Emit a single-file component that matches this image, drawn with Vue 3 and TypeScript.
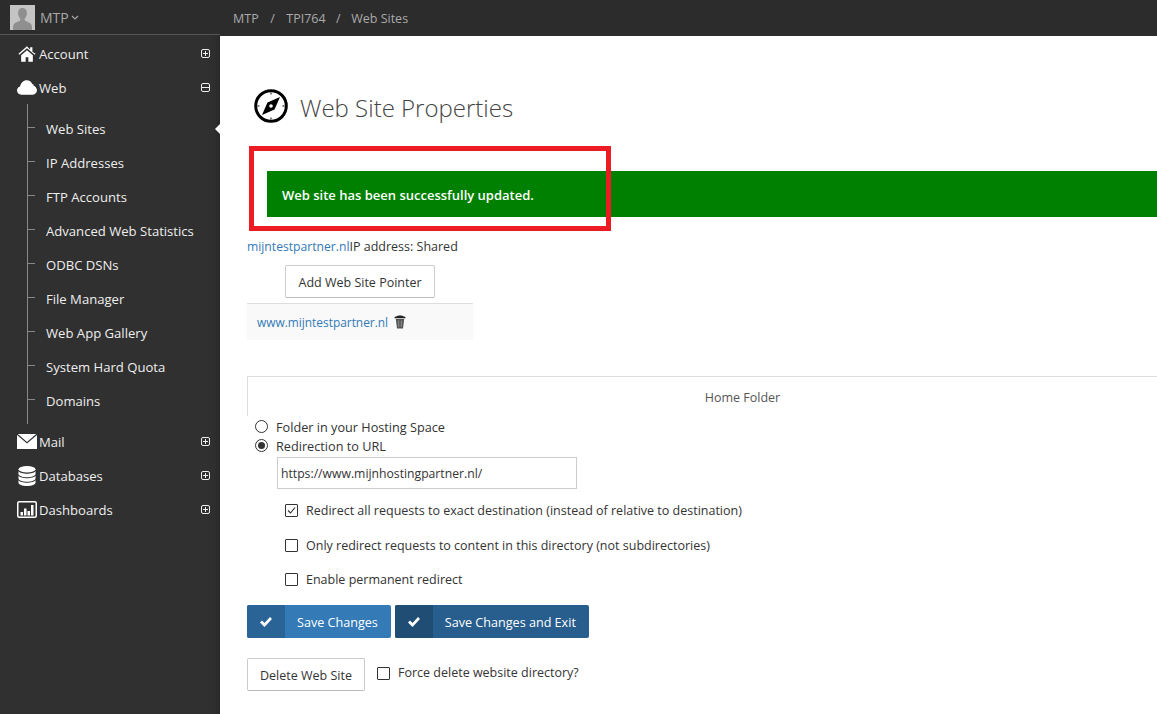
<script setup lang="ts">
const subItems: string[] = ['Web Sites', 'IP Addresses', 'FTP Accounts', 'Advanced Web Statistics', 'ODBC DSNs', 'File Manager', 'Web App Gallery', 'System Hard Quota', 'Domains']
</script>

<template>
  <div class="page">
    <aside class="sidebar">
      <div class="user">
        <svg class="avatar" viewBox="0 0 25 25">
          <rect width="25" height="25" fill="#c4c4c4" />
          <path d="M12.5 3c3.2 0 4.6 2.6 4.4 5.6-.1 2-1 3.900-2 5-.5.600-.4 1.700.4 2.200 2.200 1.200 6.700 2.200 6.700 6.400V25H3v-2.800c0-4.200 4.500-5.200 6.700-6.400.8-.5.9-1.600.4-2.200-1-1.100-1.900-3-2-5C7.900 5.600 9.300 3 12.500 3z" fill="#8f8f8f" />
        </svg>
        <span class="user-name">MTP</span>
        <svg class="caret" viewBox="0 0 8 5"><path d="M1 1l3 3 3-3" fill="none" stroke="#aaa" stroke-width="1.100" /></svg>
      </div>
      <nav class="nav">
        <div class="row">
          <svg class="ico home" viewBox="0 0 20 17"><path d="M10 0L.5 8.200l1 1.200L10 2.200l8.500 7.200 1-1.200L16 6V1h-2.500v2.900L10 0zM3.500 10V17h5v-5h3v5h5v-7L10 4.200z" fill="#fff" /></svg>
          <span>Account</span>
          <svg class="tog" viewBox="0 0 9 9"><rect x=".5" y=".5" width="8" height="8" rx="1.500" fill="none" stroke="#eee" /><path d="M2 4.500h5M4.500 2v5" stroke="#eee" /></svg>
        </div>
        <div class="row">
          <svg class="ico cloud" viewBox="0 0 21 15"><path d="M4.500 15C2 15 0 13.100 0 10.700 0 8.700 1.300 7.100 3.200 6.500 4 2.700 6.800 0 10.200 0c2.700 0 4.900 1.600 5.900 4 .3-.1.700-.1 1-.1 0 0 .1 0 .1 1.400 2.200.9 3.800 2.900 3.800 5.200 0 2.500-2 4.500-4.500 4.500z" fill="#fff" /></svg>
          <span>Web</span>
          <svg class="tog" viewBox="0 0 9 9"><rect x=".5" y=".5" width="8" height="8" rx="1.500" fill="none" stroke="#eee" /><path d="M1 4.500h7" stroke="#eee" /></svg>
        </div>
        <ul class="sub">
          <li v-for="(item, i) in subItems" :key="item" class="sub-item">
            {{ item }}
            <span v-if="i === 0" class="active-arrow"></span>
          </li>
        </ul>
        <div class="row">
          <svg class="ico mail" viewBox="0 0 20 15"><path d="M.8 0h18.400L10 8z" fill="#fff" /><path d="M0 1v14h20V1L10 9.600z" fill="#fff" /></svg>
          <span>Mail</span>
          <svg class="tog" viewBox="0 0 9 9"><rect x=".5" y=".5" width="8" height="8" rx="1.500" fill="none" stroke="#eee" /><path d="M2 4.500h5M4.500 2v5" stroke="#eee" /></svg>
        </div>
        <div class="row">
          <svg class="ico db" viewBox="0 0 18 20"><ellipse cx="9" cy="3.200" rx="8.500" ry="3.200" fill="#fff" /><path d="M.5 5c1 1.800 4.800 2.700 8.500 2.700S16.500 6.800 17.500 5v3c0 1.800-3.800 3.200-8.500 3.200S.5 9.800.5 8z" fill="#fff" /><path d="M.5 9.500c1 1.800 4.800 2.700 8.500 2.700s7.500-.9 8.500-2.700v3c0 1.800-3.800 3.200-8.500 3.200S.5 14.300.5 12.500z" fill="#fff" /><path d="M.5 14c1 1.800 4.800 2.700 8.500 2.700s7.500-.9 8.500-2.700v2.800c0 1.800-3.800 3.200-8.500 3.200S.5 18.600.5 16.800z" fill="#fff" /></svg>
          <span>Databases</span>
          <svg class="tog" viewBox="0 0 9 9"><rect x=".5" y=".5" width="8" height="8" rx="1.500" fill="none" stroke="#eee" /><path d="M2 4.500h5M4.500 2v5" stroke="#eee" /></svg>
        </div>
        <div class="row">
          <svg class="ico dash" viewBox="0 0 20 17"><rect x=".75" y=".75" width="18.500" height="15.500" rx="1.500" fill="none" stroke="#fff" stroke-width="1.500" /><path d="M3.500 11h2.500v3.500H3.500zM7 7.500h2.500v7H7zM10.500 10h2.500v4.500h-2.500zM14 4h2.500v10.500H14z" fill="#fff" /></svg>
          <span>Dashboards</span>
          <svg class="tog" viewBox="0 0 9 9"><rect x=".5" y=".5" width="8" height="8" rx="1.500" fill="none" stroke="#eee" /><path d="M2 4.500h5M4.500 2v5" stroke="#eee" /></svg>
        </div>
      </nav>
    </aside>

    <div class="content">
      <header class="topbar">
        <span>MTP</span><span class="sep">/</span><span>TPI764</span><span class="sep tight">/</span><span>Web Sites</span>
      </header>
      <main class="main">
        <div class="title-row">
          <svg class="compass" viewBox="0 0 34 34">
            <circle cx="17" cy="17" r="15.300" fill="none" stroke="#000" stroke-width="3" />
            <path d="M26 8L20.500 20.500 8 26 13.500 13.500z" fill="#000" />
            <path d="M17 3.500v2M17 28.500v2M3.500 17h2M28.500 17h2" stroke="#555" stroke-width="1.400" />
            <circle cx="17" cy="17" r="1.800" fill="#fff" />
          </svg>
          <h1>Web Site Properties</h1>
        </div>
        <div class="alert">Web site has been successfully updated.</div>
        <div class="site-line"><a class="link site">mijntestpartner.nl</a>IP address: Shared</div>
        <div class="pointer-btn-wrap"><button class="btn add">Add Web Site Pointer</button></div>
        <div class="pointer-row">
          <a class="link">www.mijntestpartner.nl</a>
          <svg class="trash" viewBox="0 0 12 14"><path d="M.5 2.200C2 1.200 4 1 4.500.5h3c.5.500 2.500.700 4 1.700v1H.5z" fill="#222" /><path d="M1.800 4h8.400L9 13.500H3z" fill="#555" /><path d="M4.600 5.500l.2 6.500M7.400 5.500l-.2 6.500" stroke="#aaa" stroke-width=".7" /></svg>
        </div>
        <div class="tab">Home Folder</div>
        <label class="radio-line"><span class="radio"></span>Folder in your Hosting Space</label>
        <label class="radio-line second"><span class="radio on"></span>Redirection to URL</label>
        <div class="url-input">https://www.mijnhostingpartner.nl/</div>
        <div class="check-line first">
          <span class="check"><svg viewBox="0 0 11 11"><path d="M2 5.500l2.500 2.500L9 2.500" fill="none" stroke="#333" stroke-width="1.100" /></svg></span>
          Redirect all requests to exact destination (instead of relative to destination)
        </div>
        <div class="check-line middle"><span class="check"></span>Only redirect requests to content in this directory (not subdirectories)</div>
        <div class="check-line"><span class="check"></span>Enable permanent redirect</div>
        <div class="actions">
          <button class="save">
            <span class="save-ico"><svg viewBox="0 0 14 12"><path d="M1 6.500l2-2 2.500 2.500L11 1l2 2-7.500 8z" fill="#fff" /></svg></span>
            <span class="save-label">Save Changes</span>
          </button>
          <button class="save dark">
            <span class="save-ico"><svg viewBox="0 0 14 12"><path d="M1 6.500l2-2 2.500 2.500L11 1l2 2-7.500 8z" fill="#fff" /></svg></span>
            <span class="save-label">Save Changes and Exit</span>
          </button>
        </div>
        <div class="delete-row">
          <button class="btn del">Delete Web Site</button>
          <span class="check force"></span>
          <span class="force-label">Force delete website directory?</span>
        </div>
        <div class="callout"></div>
      </main>
    </div>
  </div>
</template>

<style>
html, body { margin: 0; padding: 0; background: #fff; overflow: hidden; }
</style>

<style scoped>
.page { display: flex; width: 1157px; height: 714px; overflow: hidden; font-family: "Open Sans", "Noto Sans", sans-serif; font-size: 12.500px; color: #333; }
.sidebar { width: 220px; flex: none; background: #303030; color: #eee; font-size: 13.100px; box-shadow: inset -8px 0 6px -6px #262626; }
.user { height: 34px; display: flex; align-items: center; padding-left: 10px; border-bottom: 1px solid #555; background: #2c2c2c; }
.avatar { width: 25px; height: 25px; display: block; }
.user-name { margin-left: 5px; font-size: 14px; color: #a8a8a8; }
.caret { width: 8px; height: 5px; margin-left: 2px; }
.nav { padding-top: 2px; }
.row { height: 34px; display: flex; align-items: center; position: relative; padding-left: 39px; }
.ico { position: absolute; }
.home { left: 18px; top: 9px; width: 18px; height: 16px; }
.cloud { left: 17px; top: 9px; width: 20px; height: 15px; }
.mail { left: 17px; top: 9px; width: 20px; height: 15px; }
.db { left: 18px; top: 7px; width: 18px; height: 20px; }
.dash { left: 17px; top: 8px; width: 20px; height: 17px; }
.tog { position: absolute; left: 201px; top: 12px; width: 9px; height: 9px; }
.sub { list-style: none; margin: 0; padding: 7px 0; position: relative; }
.sub::before { content: ""; position: absolute; left: 27px; top: -1px; bottom: 1px; width: 1px; background: #888; }
.sub-item { height: 34px; line-height: 34px; padding-left: 46px; position: relative; }
.sub-item::before { content: ""; position: absolute; left: 28px; top: 15px; width: 7px; height: 1px; background: #888; }
.active-arrow { position: absolute; right: 0; top: 12px; border-style: solid; border-color: transparent #fff transparent transparent; border-width: 5px 5px 5px 0; }
.content { flex: 1; min-width: 0; display: flex; flex-direction: column; }
.topbar { height: 36px; flex: none; background: #2c2c2c; color: #aaa; display: flex; align-items: center; padding-left: 13px; font-size: 12.500px; }
.sep { margin: 0 11.500px; }
.sep.tight { margin: 0 10.500px; }
.main { flex: 1; position: relative; padding: 54px 0 0 27px; overflow: hidden; }
.title-row { display: flex; align-items: center; height: 36px; padding-left: 7px; }
.compass { width: 34px; height: 34px; margin-bottom: 5px; }
h1 { margin: 0 0 2px 12px; font-size: 24px; font-weight: 300; color: #444; font-family: "Open Sans", sans-serif; }
.alert { margin: 45px 0 0 20px; height: 46px; line-height: 48px; background: #008000; color: #fff; padding-left: 15px; font-weight: 600; font-size: 13px; }
.site-line { margin-top: 21px; line-height: 18px; }
.link { color: #337ab7; font-size: 11.900px; }
.link.site { font-size: 12.150px; }
.pointer-btn-wrap { margin: 9px 0 0 38px; }
.btn { height: 33px; padding: 2px 12.500px 0; background: #fff; border: 1px solid #ccc; border-bottom-color: #bbb; border-radius: 2px; color: #333; font: inherit; }
.pointer-row { margin-top: 5px; width: 216px; height: 36px; padding-left: 10px; background: #f9f9f9; border-top: 1px solid #ddd; display: flex; align-items: center; }
.trash { width: 12px; height: 14px; margin-left: 6px; }
.tab { margin-top: 36px; width: 990px; height: 40px; line-height: 42px; border-top: 1px solid #ddd; border-left: 1px solid #ddd; text-align: center; color: #555; box-sizing: border-box; }
.radio-line { display: flex; align-items: center; height: 19px; margin-top: 1px; padding-left: 8px; font-size: 12.700px; }
.radio-line.second { margin-top: 0; }
.radio { width: 11px; height: 11px; border: 1px solid #333; border-radius: 50%; margin-right: 8px; position: relative; }
.radio.on::after { content: ""; position: absolute; inset: 2px; border-radius: 50%; background: #333; }
.url-input { margin: 2px 0 0 30px; width: 295px; height: 30px; line-height: 32px; border: 1px solid #ccc; padding-left: 3px; font-size: 12.200px; }
.check-line { display: flex; align-items: center; height: 34px; padding-left: 38px; }
.check-line.first { margin-top: 4px; }
.check-line.middle { margin-top: 1px; }
.check { width: 11px; height: 11px; border: 1px solid #333; display: inline-block; margin-right: 8px; flex: none; border-radius: 1px; }
.check svg { display: block; width: 11px; height: 11px; }
.actions { display: flex; gap: 4px; margin-top: 9px; }
.save { height: 33px; padding: 0; border: 0; border-radius: 2px; background: #337ab7; color: #fff; display: flex; font: inherit; overflow: hidden; }
.save.dark { background: #285e8e; }
.save-ico { width: 38px; height: 33px; background: #2a6496; display: flex; align-items: center; justify-content: center; }
.dark .save-ico { background: #204d74; }
.save-ico svg { width: 14px; height: 12px; }
.save-label { padding: 0 13px 0 12px; line-height: 35px; font-size: 12.600px; }
.delete-row { display: flex; align-items: flex-start; margin-top: 20px; }
.del { width: 118px; padding: 2px 0 0; }
.force { margin: 9px 8px 0 12px; }
.force-label { margin-top: 6px; }
.callout { position: absolute; left: 29px; top: 110px; width: 352px; height: 75px; border: 5px solid #ed1c24; }
</style>
